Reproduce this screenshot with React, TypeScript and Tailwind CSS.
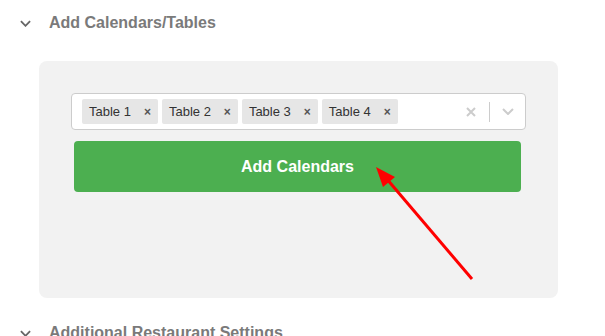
import * as React from "react";

const tables = ["Table 1", "Table 2", "Table 3", "Table 4"];

function Chevron({ className }: { className?: string }) {
  return (
    <svg className={className} viewBox="0 0 12 7" fill="none" stroke="currentColor" strokeWidth={2}>
      <path d="M1 1l5 5 5-5" />
    </svg>
  );
}

function SectionHeader({ title }: { title: string }) {
  return (
    <div className="flex h-[46px] items-center">
      <Chevron className="ml-[20px] h-[7px] w-[11px] text-[#666]" />
      <span className="ml-[18px] text-[16px] font-bold text-[#7a7a7a]">{title}</span>
    </div>
  );
}

function Tag({ label }: { label: string }) {
  return (
    <div className="flex h-[25px] items-center rounded-[2px] bg-[#e6e6e6] pl-[7px] pr-[7px] text-[13px] text-[#333]">
      <span>{label}</span>
      <span className="ml-[13px] text-[12px] font-bold leading-none text-[#555]">×</span>
    </div>
  );
}

export default function App() {
  return (
    <div className="relative h-[336px] w-[605px] overflow-hidden bg-white font-['Liberation_Sans',Arial,sans-serif]">
      <SectionHeader title="Add Calendars/Tables" />

      <div className="ml-[39px] mt-[15px] h-[237px] w-[519px] rounded-[8px] bg-[#f2f2f2] p-8">
        <div className="flex h-[37px] items-center rounded-[4px] border border-[#ccc] bg-white pl-[10px]">
          <div className="flex flex-1 gap-[4px]">
            {tables.map((t) => (
              <Tag key={t} label={t} />
            ))}
          </div>
          <svg className="h-[10px] w-[10px] text-[#ccc]" viewBox="0 0 10 10" stroke="currentColor" strokeWidth={2}>
            <path d="M1 1l8 8M9 1l-8 8" />
          </svg>
          <div className="ml-[13px] h-[20px] w-px bg-[#ccc]" />
          <Chevron className="ml-[12px] mr-[11px] h-[7px] w-[12px] text-[#ccc]" />
        </div>

        <button className="mx-[3px] mt-[11px] flex h-[51px] w-[447px] items-center justify-center rounded-[4px] bg-[#4caf50] text-[16px] font-bold text-white">
          Add Calendars
        </button>
      </div>

      <div className="mt-[12px]">
        <SectionHeader title="Additional Restaurant Settings" />
      </div>

      <svg className="pointer-events-none absolute left-0 top-0 h-[336px] w-[605px]" viewBox="0 0 605 336">
        <line x1="472" y1="279" x2="386" y2="178" stroke="#ff0000" strokeWidth="3" />
        <polygon points="376,167 395,177 383,187" fill="#ff0000" />
      </svg>
    </div>
  );
}
